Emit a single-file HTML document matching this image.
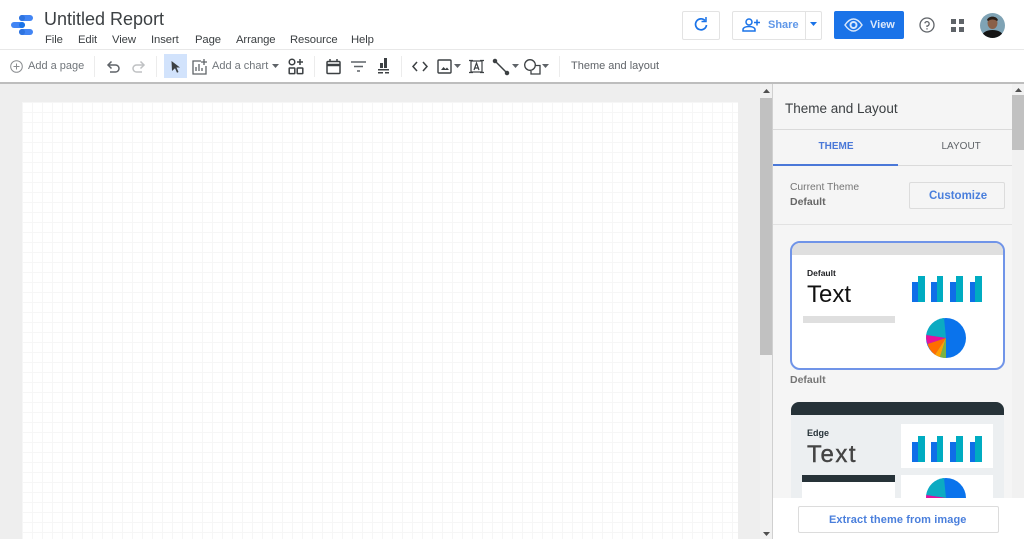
<!DOCTYPE html>
<html><head><meta charset="utf-8"><style>
html,body{margin:0;padding:0;width:1024px;height:539px;overflow:hidden;background:#fff}
body{font-family:"Liberation Sans",sans-serif;position:relative;color:#3c4043}
.a{position:absolute}
.t{position:absolute;white-space:nowrap;line-height:1}
svg{position:absolute;overflow:visible}
.m{font-size:11.3px;color:#3c4043;top:35px;letter-spacing:-.1px}
.tb{font-size:11px;color:#5f6368;top:61px}
.sep{position:absolute;top:56px;width:1px;height:21px;background:#ececec}
</style></head><body>
<!-- header -->
<div class="a" style="left:0;top:49px;width:1024px;height:1px;background:#e8e8e8"></div>
<svg style="left:0;top:0" width="40" height="40">
<rect x="19" y="15" width="14" height="6" rx="3" fill="#4285f4"/><rect x="11" y="22" width="14" height="6" rx="3" fill="#4285f4"/><rect x="19" y="29" width="14" height="6" rx="3" fill="#4285f4"/>
<circle cx="22" cy="18" r="3" fill="#2f74e0"/><circle cx="22" cy="25" r="3" fill="#1a73e8"/><circle cx="22" cy="32" r="3" fill="#2f74e0"/></svg>
<div class="t" style="left:44px;top:10px;font-size:18px;color:#3c4043">Untitled Report</div>
<div class="t m" style="left:45px">File</div><div class="t m" style="left:78px">Edit</div><div class="t m" style="left:112px">View</div><div class="t m" style="left:151px">Insert</div><div class="t m" style="left:195px">Page</div><div class="t m" style="left:236px">Arrange</div><div class="t m" style="left:290px">Resource</div><div class="t m" style="left:351px">Help</div>
<!-- top right -->
<div class="a" style="left:682px;top:11px;width:36px;height:27px;border:1px solid #e3e3e3;border-radius:2px"></div>
<svg style="left:692px;top:16px" width="18" height="18" fill="none" stroke="#1a73e8" stroke-width="1.7"><path d="M13 4.500A5.500 5.500 0 1 0 14.500 9"/><path d="M9.500 5.500H14V1" stroke-width="1.500"/></svg>
<div class="a" style="left:732px;top:11px;width:88px;height:27px;border:1px solid #e3e3e3;border-radius:2px"></div>
<div class="a" style="left:805px;top:12px;width:1px;height:27px;background:#e3e3e3"></div>
<svg style="left:741px;top:17px" width="20" height="16" fill="none" stroke="#1a73e8" stroke-width="1.500"><circle cx="8" cy="5" r="3"/><path d="M2 14v-1.500c0-2 3-3 6-3s6 1 6 3V14z"/><path d="M13 5.500h6M16 2.500v6"/></svg>
<div class="t" style="left:768px;top:20px;font-size:11px;font-weight:bold;color:#5f97e8">Share</div>
<svg style="left:810px;top:22px" width="8" height="5"><path d="M0 0h7L3.500 4z" fill="#1a73e8"/></svg>
<div class="a" style="left:834px;top:11px;width:70px;height:28px;background:#1a73e8;border-radius:2px"></div>
<svg style="left:844px;top:17px" width="20" height="16" fill="none" stroke="#d6e6fb" stroke-width="1.500"><path d="M1 8C4 3.500 7 2 9.500 2S15 3.500 18 8C15 12.500 12 14 9.500 14S4 12.500 1 8Z"/><circle cx="9.500" cy="8" r="3" stroke-width="2"/></svg>
<div class="t" style="left:870px;top:20px;font-size:11px;font-weight:bold;color:#dce9fb">View</div>
<svg style="left:919px;top:17px" width="16" height="16" fill="none" stroke="#5f6368" stroke-width="1.300"><circle cx="8" cy="8" r="7"/><path d="M5.800 6.300A2.200 2.200 0 1 1 8 9v1"/><path d="M8 11.200v1.300"/></svg>
<svg style="left:951px;top:19px" width="13" height="13" fill="#5f6368"><rect width="5" height="5"/><rect x="8" width="5" height="5"/><rect y="8" width="5" height="5"/><rect x="8" y="8" width="5" height="5"/></svg>
<svg style="left:980px;top:13px" width="25" height="25"><defs><clipPath id="av"><circle cx="12.500" cy="12.500" r="12.500"/></clipPath></defs><g clip-path="url(#av)"><rect width="25" height="25" fill="#7fa3b5"/><ellipse cx="12.500" cy="10" rx="5" ry="6" fill="#8a6048"/><path d="M7 7c1-4 9-5 11 0l-1 1c-3-2-6-2-9 0z" fill="#2a1d16"/><path d="M1 26c0-6 5-9 11.500-9S24 20 24 26z" fill="#151515"/></g></svg>
<!-- toolbar -->
<svg style="left:10px;top:60px" width="13" height="13" fill="none" stroke="#8a8d90" stroke-width="1"><circle cx="6.500" cy="6.500" r="5.800"/><path d="M6.500 3.500v6M3.500 6.500h6"/></svg>
<div class="t tb" style="left:28px;color:#70757a">Add a page</div>
<div class="sep" style="left:94px"></div>
<svg style="left:106px;top:59px" width="15" height="15" fill="none" stroke="#5f6368" stroke-width="1.500"><path d="M3 6h6.500a3.500 3.500 0 0 1 0 7H4"/><path d="M5.500 2.500L2 6l3.500 3.500"/></svg>
<svg style="left:131px;top:59px" width="15" height="15" fill="none" stroke="#bfc1c3" stroke-width="1.500"><path d="M12 6H5.500a3.500 3.500 0 0 0 0 7H11"/><path d="M9.500 2.500L13 6 9.500 9.500"/></svg>
<div class="sep" style="left:156px"></div>
<div class="a" style="left:164px;top:54px;width:23px;height:24px;background:#d2e3fc"></div>
<svg style="left:171px;top:61px" width="10" height="12"><path d="M0.500 0L9 6.500H5.500L7.500 11 6 11.700 4 7.200 1 10z" fill="#3c4043"/></svg>
<svg style="left:192px;top:58px" width="16" height="17" fill="none" stroke="#5f6368" stroke-width="1.300"><path d="M9 3H1v13h13V8"/><path d="M4 13V9M7 13V6M10 13v-3M12 1v6M9 4h6" /></svg>
<div class="t tb" style="left:212px;color:#70757a">Add a chart</div>
<svg style="left:272px;top:64px" width="7" height="4"><path d="M0 0h7L3.500 4z" fill="#5f6368"/></svg>
<svg style="left:288px;top:58px" width="16" height="17" fill="none" stroke="#3c4043" stroke-width="1.500"><circle cx="4" cy="4" r="2.800"/><rect x="1.200" y="10" width="5.600" height="5.600" rx=".5"/><rect x="9.200" y="10" width="5.600" height="5.600" rx=".5"/><path d="M12 1v6M9 4h6"/></svg>
<div class="sep" style="left:314px"></div>
<svg style="left:326px;top:59px" width="15" height="16" fill="none" stroke="#3c4043" stroke-width="1.500"><rect x="1" y="2.500" width="13" height="12" rx="1"/><path d="M1 6h13" stroke-width="2.500"/><path d="M4 0v3M11 0v3"/></svg>
<svg style="left:351px;top:61px" width="15" height="11" fill="none" stroke="#5f6368" stroke-width="1.400"><path d="M0 1h15M3 5.500h9M6 10h3"/></svg>
<svg style="left:377px;top:58px" width="13" height="17" fill="#3c4043"><rect x="7" y="0" width="3" height="10"/><rect x="3" y="5" width="3" height="5"/><rect x="1" y="11" width="11" height="1.500"/><rect x="1" y="14" width="5" height="1.500"/><rect x="8" y="14" width="4" height="1.500"/></svg>
<div class="sep" style="left:401px"></div>
<svg style="left:412px;top:61px" width="16" height="11" fill="none" stroke="#3c4043" stroke-width="1.500"><path d="M5 1L1 5.500 5 10M11 1l4 4.500L11 10"/></svg>
<svg style="left:437px;top:59px" width="16" height="15" fill="none" stroke="#3c4043" stroke-width="1.400"><rect x="1" y="1" width="13" height="13" rx="1"/><path d="M4 11l2.500-3 2 2 1.500-1.500L12 11z" fill="#3c4043" stroke="none"/></svg>
<svg style="left:454px;top:64px" width="7" height="4"><path d="M0 0h7L3.500 4z" fill="#5f6368"/></svg>
<svg style="left:469px;top:59px" width="15" height="15" fill="none" stroke="#3c4043" stroke-width="1.200"><rect x="2" y="2" width="11" height="11"/><path d="M0 1.500h4M11 1.500h4M0 13.500h4M11 13.500h4M5 11l2.500-7 2.500 7M6 9h3"/></svg>
<svg style="left:493px;top:59px" width="16" height="16" fill="none" stroke="#3c4043" stroke-width="1.500"><path d="M2 2l12 12"/><circle cx="2" cy="2" r="1.500" fill="#3c4043"/><circle cx="14" cy="14" r="1.500" fill="#3c4043"/></svg>
<svg style="left:512px;top:64px" width="7" height="4"><path d="M0 0h7L3.500 4z" fill="#5f6368"/></svg>
<svg style="left:524px;top:59px" width="17" height="16" fill="none" stroke="#3c4043" stroke-width="1.300"><circle cx="6" cy="6" r="5.300"/><path d="M11.500 6.500H16V15H7v-3"/></svg>
<svg style="left:542px;top:64px" width="7" height="4"><path d="M0 0h7L3.500 4z" fill="#5f6368"/></svg>
<div class="sep" style="left:559px"></div>
<div class="t tb" style="left:571px">Theme and layout</div>
<div class="a" style="left:0;top:82px;width:1024px;height:2px;background:#bdbdbd"></div>
<!-- canvas -->
<div class="a" style="left:0;top:84px;width:760px;height:455px;background:#eeeeee"></div>
<div class="a" style="left:22px;top:102px;width:716px;height:437px;background-color:#fff;background-image:linear-gradient(#f6f6f6 1px,transparent 1px),linear-gradient(90deg,#f6f6f6 1px,transparent 1px);background-size:10px 10px"></div>
<div class="a" style="left:760px;top:84px;width:13px;height:455px;background:#f1f1f1"></div>
<div class="a" style="left:760px;top:98px;width:12px;height:257px;background:#c1c1c1"></div>
<svg style="left:763px;top:89px" width="7" height="4"><path d="M0 4L3.500 0 7 4z" fill="#505050"/></svg>
<svg style="left:763px;top:532px" width="7" height="4"><path d="M0 0L3.500 4 7 0z" fill="#505050"/></svg>
<!-- panel -->
<div class="a" style="left:772px;top:84px;width:252px;height:455px;background:#f5f5f5"></div>
<div class="a" style="left:772px;top:84px;width:1px;height:455px;background:#d0d0d0"></div>
<div class="a" style="left:1012px;top:84px;width:12px;height:455px;background:#f1f1f1"></div>
<div class="a" style="left:1012px;top:95px;width:12px;height:55px;background:#c1c1c1"></div>
<svg style="left:1015px;top:88px" width="7" height="4"><path d="M0 4L3.500 0 7 4z" fill="#505050"/></svg>
<svg style="left:1015px;top:532px" width="7" height="4"><path d="M0 0L3.500 4 7 0z" fill="#505050"/></svg>
<div class="t" style="left:785px;top:102px;font-size:13.500px;color:#3c4043">Theme and Layout</div>
<div class="a" style="left:773px;top:129px;width:239px;height:1px;background:#dadada"></div>
<div class="t" style="left:818.500px;top:142px;font-size:10px;font-weight:bold;color:#4a78d8">THEME</div>
<div class="t" style="left:941.500px;top:142px;font-size:10px;color:#5f6368">LAYOUT</div>
<div class="a" style="left:773px;top:165px;width:239px;height:1px;background:#dadada"></div>
<div class="a" style="left:773px;top:164px;width:125px;height:2px;background:#4a78d8"></div>
<div class="t" style="left:790px;top:183px;font-size:10.300px;color:#757575">Current Theme</div>
<div class="t" style="left:790px;top:197px;font-size:10.500px;font-weight:bold;color:#666">Default</div>
<div class="a" style="left:909px;top:182px;width:94px;height:25px;border:1px solid #dcdcdc;border-radius:2px"></div>
<div class="t" style="left:929px;top:191px;font-size:11.500px;font-weight:bold;color:#4a7fdc">Customize</div>
<div class="a" style="left:773px;top:224px;width:239px;height:1px;background:#e2e2e2"></div>
<!-- Default card -->
<div class="a" style="left:790px;top:241px;width:211px;height:125px;border:2px solid #7094e8;border-radius:10px;background:#fff;overflow:hidden"><div style="height:12px;background:#dfdfdf"></div></div>
<div class="t" style="left:807px;top:269px;font-size:8.500px;font-weight:bold;color:#202124">Default</div>
<div class="t" style="left:807px;top:283px;font-size:24px;color:#111">Text</div>
<div class="a" style="left:803px;top:316px;width:92px;height:7px;background:#dfdfdf"></div>
<svg style="left:911px;top:276px" width="72" height="26"><g fill="#00acc1"><rect x="7" width="7" height="26"/><rect x="26" width="6" height="26"/><rect x="45" width="7" height="26"/><rect x="64" width="7" height="26"/></g><g fill="#0f6ee8"><rect x="1" y="6" width="6" height="20"/><rect x="20" y="6" width="6" height="20"/><rect x="39" y="6" width="6" height="20"/><rect x="59" y="6" width="5" height="20"/></g></svg>
<svg style="left:926px;top:318px" width="40" height="40"><circle cx="20" cy="20" r="20" fill="#0a73ec"/><path d="M20 20L18 0A20 20 0 0 0 .2 17z" fill="#0cabc2"/><path d="M20 20L.2 17A20 20 0 0 0 1.500 26z" fill="#e6109c"/><path d="M20 20L1.500 26A20 20 0 0 0 9 36.700z" fill="#ff6d00"/><path d="M20 20L9 36.700A20 20 0 0 0 14 39z" fill="#ffa000"/><path d="M20 20L14 39A20 20 0 0 0 20 40z" fill="#7cb342"/></svg>
<div class="t" style="left:790px;top:375px;font-size:10.500px;font-weight:bold;color:#757575">Default</div>
<!-- Edge card -->
<div class="a" style="left:791px;top:402px;width:213px;height:110px;border-radius:8px 8px 0 0;background:#eceff1;overflow:hidden"><div style="height:13px;background:#263238"></div></div>
<div class="t" style="left:807px;top:429px;font-size:9px;font-weight:bold;color:#263238">Edge</div>
<div class="t" style="left:807px;top:443px;font-size:24px;color:#444;letter-spacing:1.500px;-webkit-text-stroke:.4px #444">Text</div>
<div class="a" style="left:802px;top:475px;width:93px;height:7px;background:#263238"></div>
<div class="a" style="left:802px;top:482px;width:93px;height:20px;background:#fff"></div>
<div class="a" style="left:901px;top:424px;width:92px;height:44px;background:#fff"></div>
<div class="a" style="left:901px;top:475px;width:92px;height:30px;background:#fff"></div>
<svg style="left:911px;top:436px" width="72" height="26"><g fill="#00acc1"><rect x="7" width="7" height="26"/><rect x="26" width="6" height="26"/><rect x="45" width="7" height="26"/><rect x="64" width="7" height="26"/></g><g fill="#0f6ee8"><rect x="1" y="6" width="6" height="20"/><rect x="20" y="6" width="6" height="20"/><rect x="39" y="6" width="6" height="20"/><rect x="59" y="6" width="5" height="20"/></g></svg>
<svg style="left:926px;top:478px" width="40" height="40"><circle cx="20" cy="20" r="20" fill="#0a73ec"/><path d="M20 20L18 0A20 20 0 0 0 .2 17z" fill="#0cabc2"/><path d="M20 20L.2 17A20 20 0 0 0 1.500 26z" fill="#e6109c"/></svg>
<!-- footer -->
<div class="a" style="left:773px;top:498px;width:251px;height:41px;background:#fff"></div>
<div class="a" style="left:798px;top:506px;width:199px;height:25px;border:1px solid #dcdcdc;border-radius:2px;background:#fff"></div>
<div class="t" style="left:829px;top:515px;font-size:11px;font-weight:bold;color:#4a7fdc;letter-spacing:.1px">Extract theme from image</div>
</body></html>
